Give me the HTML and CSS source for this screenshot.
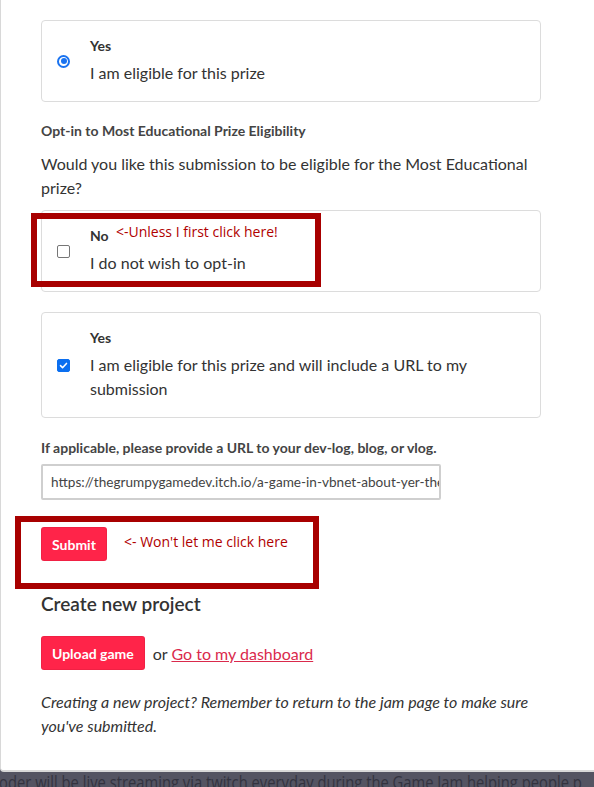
FILE: index.html
```html
<!DOCTYPE html>
<html>
<head>
<meta charset="utf-8">
<link rel="stylesheet" href="styles.css">
</head>
<body>
<div class="panel">
  <div class="card">
    <span class="radio"></span>
    <div class="opt-text">
      <div class="opt-title">Yes</div>
      <div class="opt-desc">I am eligible for this prize</div>
    </div>
  </div>

  <div class="field-label">Opt-in to Most Educational Prize Eligibility</div>
  <p class="question">Would you like this submission to be eligible for the Most Educational prize?</p>

  <div class="card">
    <span class="checkbox"></span>
    <div class="opt-text">
      <div class="opt-title">No</div>
      <div class="opt-desc">I do not wish to opt-in</div>
    </div>
  </div>

  <div class="card card-gap">
    <span class="checkbox checked">
      <svg viewBox="0 0 14 14" width="13" height="13"><path d="M3.2 7.2 L5.8 9.8 L10.8 4.4" fill="none" stroke="#fff" stroke-width="2" stroke-linecap="round" stroke-linejoin="round"/></svg>
    </span>
    <div class="opt-text">
      <div class="opt-title">Yes</div>
      <div class="opt-desc">I am eligible for this prize and will include a URL to my submission</div>
    </div>
  </div>

  <div class="field-label url-label">If applicable, please provide a URL to your dev-log, blog, or vlog.</div>
  <div class="url-input">https://thegrumpygamedev.itch.io/a-game-in-vbnet-about-yer-the-lost-boy</div>

  <div class="submit-row">
    <button class="btn">Submit</button>
  </div>

  <h2 class="heading">Create new project</h2>
  <div class="upload-row">
    <button class="btn">Upload game</button>
    <span class="or">or <a href="#" class="link">Go to my dashboard</a></span>
  </div>
  <p class="note">Creating a new project? Remember to return to the jam page to make sure you've submitted.</p>

  <div class="annot annot-1"></div>
  <div class="annot-text annot-text-1">&lt;-Unless I first click here!</div>
  <div class="annot annot-2"></div>
  <div class="annot-text annot-text-2">&lt;- Won't let me click here</div>
</div>
<div class="strip"><span class="strip-text">coder will be live streaming via twitch everyday during the Game Jam helping people p</span></div>
</body>
</html>
```

FILE: styles.css
```css
* { box-sizing: border-box; }
html, body {
  margin: 0;
  padding: 0;
  background: #545462;
  overflow: hidden;
}
body {
  width: 594px;
  height: 787px;
  font-family: Lato, "Liberation Sans", sans-serif;
  color: #222;
}
.panel {
  position: relative;
  background: #fff;
  border-left: 1px solid #d8d8d8;
  border-bottom: 2px solid #d8d8d8;
  border-bottom-left-radius: 4px;
  padding: 20px 0 30px 40px;
  height: 772px;
}
.card {
  width: 500px;
  border: 1px solid #dcdcdc;
  border-radius: 4px;
  padding: 16px 15px 16px 15px;
  display: flex;
  align-items: center;
  gap: 20px;
}
.card-gap { margin-top: 20px; }
.radio {
  flex: none;
  width: 13px;
  height: 13px;
  border-radius: 50%;
  border: 2px solid #1a73f0;
  background: #fff;
  position: relative;
}
.radio::after {
  content: "";
  position: absolute;
  left: 1.5px;
  top: 1.5px;
  width: 6px;
  height: 6px;
  border-radius: 50%;
  background: #1a73f0;
}
.checkbox {
  flex: none;
  width: 13px;
  height: 13px;
  border: 1px solid #767676;
  border-radius: 2px;
  background: #fff;
  display: flex;
  align-items: center;
  justify-content: center;
}
.checkbox.checked {
  background: #0b6ff0;
  border-color: #0b6ff0;
}
.checkbox svg { display: block; }
.opt-text { flex: 1; }
.opt-title {
  font-size: 14px;
  font-weight: 700;
  line-height: 18px;
  color: #333;
  margin-bottom: 6px;
}
.opt-desc {
  font-size: 16px;
  line-height: 24px;
  color: #333;
}
.field-label {
  font-size: 14px;
  font-weight: 700;
  line-height: 18px;
  color: #444;
  margin-top: 20px;
}
.question {
  width: 500px;
  font-size: 16px;
  line-height: 24px;
  color: #333;
  margin: 12px 0 10px;
}
.url-label { margin-top: 21px; }
.url-input {
  margin-top: 7px;
  width: 400px;
  height: 36px;
  border: 2px solid #cfcfcf;
  border-radius: 2px;
  padding: 0 8px;
  font-size: 13.6px;
  line-height: 32px;
  color: #444;
  white-space: nowrap;
  overflow: hidden;
}
.submit-row { margin-top: 27px; display: flex; }
.btn {
  font-family: Lato, "Liberation Sans", sans-serif;
  font-size: 14px;
  font-weight: 700;
  color: #fff;
  background: #ff2449;
  border: none;
  border-radius: 3px;
  height: 34px;
  padding: 0 11px;
  box-shadow: inset 0 0 0 1px rgba(0,0,0,0.06);
}
.heading {
  font-size: 19px;
  font-weight: 600;
  line-height: 24px;
  color: #333;
  margin: 31px 0 20px;
}
.upload-row {
  display: flex;
  align-items: center;
  gap: 8px;
}
.or {
  font-size: 16px;
  color: #333;
}
.link {
  color: #da2a4c;
  text-decoration: underline;
}
.note {
  width: 500px;
  font-size: 16px;
  line-height: 24px;
  font-style: italic;
  color: #333;
  margin: 20px 0 0;
}
.annot {
  position: absolute;
  border: 6px solid #a80000;
}
.annot-1 { left: 30px; top: 213px; width: 290px; height: 74px; }
.annot-2 { left: 14px; top: 516px; width: 304px; height: 73px; }
.annot-text {
  position: absolute;
  font-family: "Open Sans", "Liberation Sans", sans-serif;
  font-size: 14px;
  color: #b00000;
  line-height: 18px;
  white-space: nowrap;
}
.annot-text-1 { left: 115px; top: 223px; }
.annot-text-2 { left: 123px; top: 533px; }
.strip {
  height: 15px;
  overflow: hidden;
  position: relative;
}
.strip-text {
  position: absolute;
  left: -8px;
  top: -2px;
  font-family: "Open Sans", sans-serif;
  font-size: 18px;
  line-height: 24px;
  color: #33333f;
  white-space: nowrap;
  transform: scaleX(0.82);
  transform-origin: left top;
}
```
